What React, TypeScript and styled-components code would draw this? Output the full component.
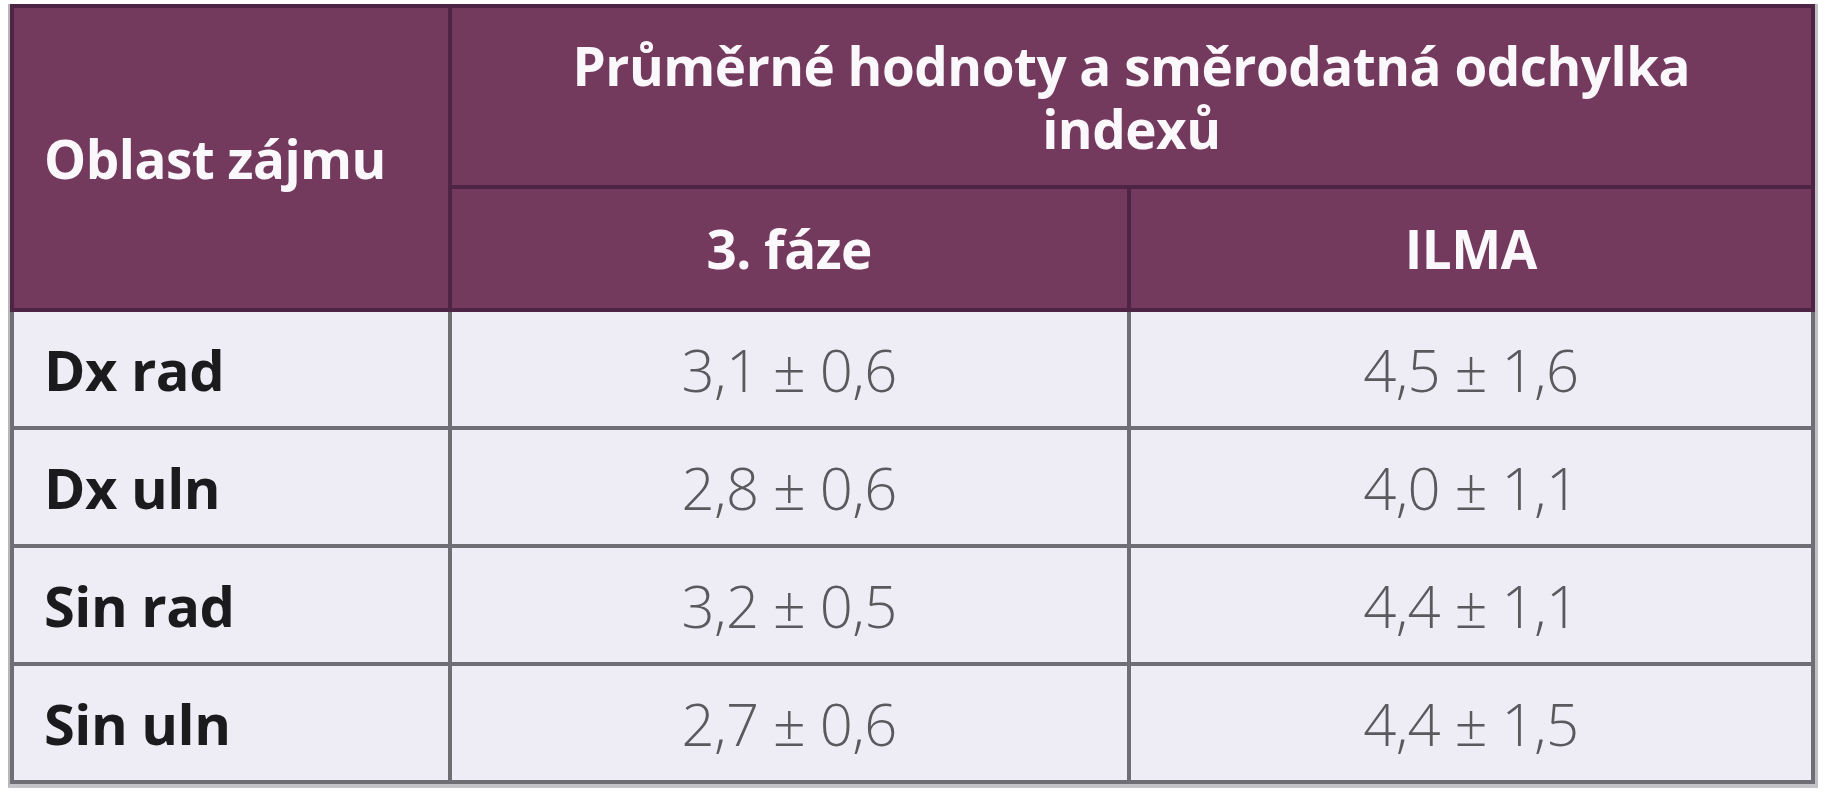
import styled, { createGlobalStyle } from "styled-components";

interface Row {
  label: string;
  phase: string;
  ilma: string;
}

const rows: Row[] = [
  { label: "Dx rad", phase: "3,1 ± 0,6", ilma: "4,5 ± 1,6" },
  { label: "Dx uln", phase: "2,8 ± 0,6", ilma: "4,0 ± 1,1" },
  { label: "Sin rad", phase: "3,2 ± 0,5", ilma: "4,4 ± 1,1" },
  { label: "Sin uln", phase: "2,7 ± 0,6", ilma: "4,4 ± 1,5" },
];

const GlobalStyle = createGlobalStyle`
  body {
    margin: 0;
    background: #fff;
    font-family: "Open Sans", "Liberation Sans", sans-serif;
  }
`;

const Page = styled.div`
  padding: 4px 0 0 8px;
`;

const Frame = styled.div`
  width: 1805px;
  border-left: 2px solid #b8b8bc;
  border-bottom: 4px solid #c4c4c8;
  border-right: 3px solid #c0c0c4;
`;

const Table = styled.table`
  width: 100%;
  border-collapse: collapse;
  table-layout: fixed;
  border: 4px solid #4f4a50;
`;

const HeadCell = styled.th<{ $align?: "left" | "center"; $height: number }>`
  height: ${(p) => p.$height}px;
  padding: 0;
  padding-left: ${(p) => (p.$align === "left" ? "30px" : "0")};
  background: #743a5e;
  color: #fbf8fc;
  border: 4px solid #4d2443;
  font-size: 53px;
  font-weight: 700;
  line-height: 63px;
  letter-spacing: -0.5px;
  text-align: ${(p) => p.$align ?? "center"};
  vertical-align: middle;
`;

const LabelCell = styled.td`
  height: 114px;
  padding: 0 0 0 30px;
  background: #eeedf6;
  border: 4px solid #6e6e74;
  color: #1b1b1d;
  font-size: 56px;
  font-weight: 700;
  letter-spacing: -0.5px;
  vertical-align: middle;
`;

const ValueCell = styled.td`
  padding: 0;
  background: #eeedf6;
  border: 4px solid #6e6e74;
  color: #5a5a5e;
  font-size: 58px;
  font-weight: 300;
  letter-spacing: -0.6px;
  text-align: center;
  vertical-align: middle;
`;

export default function App() {
  return (
    <Page>
      <GlobalStyle />
      <Frame>
        <Table>
          <colgroup>
            <col style={{ width: "24.3%" }} />
            <col style={{ width: "37.7%" }} />
            <col />
          </colgroup>
          <thead>
            <tr>
              <HeadCell rowSpan={2} $align="left" $height={177}>
                Oblast zájmu
              </HeadCell>
              <HeadCell colSpan={2} $height={177}>
                Průměrné hodnoty a směrodatná odchylka
                <br />
                indexů
              </HeadCell>
            </tr>
            <tr>
              <HeadCell $height={119}>3. fáze</HeadCell>
              <HeadCell $height={119}>ILMA</HeadCell>
            </tr>
          </thead>
          <tbody>
            {rows.map((row) => (
              <tr key={row.label}>
                <LabelCell>{row.label}</LabelCell>
                <ValueCell>{row.phase}</ValueCell>
                <ValueCell>{row.ilma}</ValueCell>
              </tr>
            ))}
          </tbody>
        </Table>
      </Frame>
    </Page>
  );
}
